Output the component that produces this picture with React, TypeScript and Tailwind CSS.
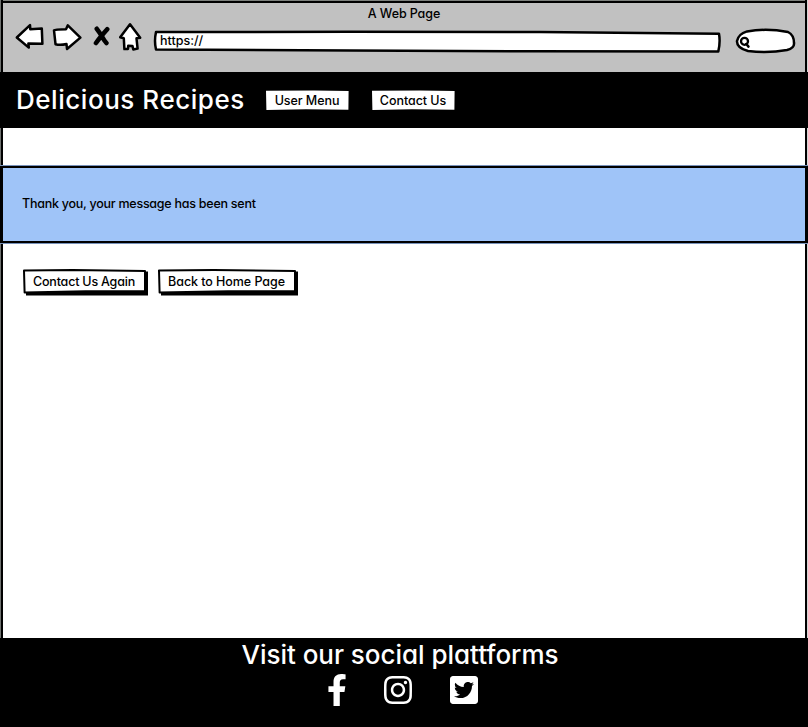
import type { ReactNode } from "react";
import { FaFacebookF, FaInstagram, FaTwitterSquare } from "react-icons/fa";

const stroke = {
  fill: "#fff",
  stroke: "#000",
  strokeWidth: 2.5,
  strokeLinejoin: "round" as const,
  strokeLinecap: "round" as const,
};

function BrowserBar() {
  return (
    <header className="relative h-[72px] shrink-0 border-t border-[#7d817d] bg-[#c1c1c1]">
      <div className="h-[2px] bg-black" />
      <div className="flex h-[21px] items-center justify-center text-[12.5px] tracking-[-0.1px]">
        <h1 className="pt-[2px] font-medium">A Web Page</h1>
      </div>
      <div className="-ml-[3px] flex h-[34px] items-start">
        <svg className="ml-[14px] mt-[-4px] shrink-0" width="30" height="34" viewBox="14 20 30 34" {...stroke}>
          <path d="M16.8 37.5 L30 25.2 L30.3 29.3 L41.8 28.6 L42.4 43.8 L28.4 43.4 L28.8 47.6 Z" />
        </svg>
        <svg className="ml-[7px] mt-[-4px] shrink-0" width="32" height="34" viewBox="51 20 32 34" {...stroke}>
          <path d="M54 30.4 Q55 29.2 66 29.2 L67.8 25.4 L80.4 37.6 L67 49 L66.5 44 Q60 45.6 55.5 44.2 Z" />
        </svg>
        <svg className="ml-[10px] mt-[-4px] shrink-0" width="18" height="34" viewBox="93 20 18 34">
          <path
            d="M96.8 28.8 Q100 33 101.6 35.8 Q104 40.5 106.4 43 M107.2 29.3 Q103.5 33.5 101.6 35.8 Q98.5 39.5 96 43"
            fill="none"
            stroke="#000"
            strokeWidth="4.6"
            strokeLinecap="round"
          />
        </svg>
        <svg className="ml-[6px] mt-[-4px] shrink-0" width="26" height="34" viewBox="117 20 26 34" {...stroke}>
          <path d="M130 24.2 L140.2 37.8 L136.5 38.3 L137.6 48.6 L133.3 49.4 L132.4 45.9 L128.2 45.8 L128 49 L124.4 49.1 L123.8 38.2 L120.2 37.3 Z" />
        </svg>
        <div className="relative ml-[9px] mt-[4px] h-[26px] w-[571px] shrink-0">
          <svg className="absolute inset-0" width="571" height="26" viewBox="152 28 571 26" {...stroke}>
            <path d="M156 32 L350 31.8 L540 32 L719 33.7 Q720.5 42 718.3 51.5 L530 51.3 L350 50.4 L156 49.5 Q154 41 156 32 Z" />
          </svg>
          <span className="relative ml-[8px] block text-[12.5px] font-medium leading-[26px]">https://</span>
        </div>
        <svg className="ml-[11px] mt-[2px] shrink-0" width="64" height="29" viewBox="734 26 64 29" {...stroke}>
          <path d="M747 31.4 Q767 28 788 32 Q794 35 794 43 Q794.6 48 787 50 Q768 53.5 748 51 Q736.6 48 737 41 Q738.4 34 747 31.4 Z" />
          <circle cx="744.5" cy="41.3" r="3.5" strokeWidth="2.3" />
          <path d="M746.3 44 L748.5 46.6" />
        </svg>
      </div>
    </header>
  );
}

function NavLink({ children }: { children: ReactNode }) {
  return (
    <a className="relative flex h-[20px] w-[83px] items-center justify-center text-[12.5px] font-medium">
      <svg className="absolute inset-0" width="83" height="20" viewBox="0 0 83 20" fill="#fff">
        <path d="M0 0.7 L48 0.5 L82.6 1 L82.4 19.7 L40 19.3 L0.4 20 Z" />
      </svg>
      <span className="relative pr-[1px] pt-[2px] tracking-[-0.06px]">{children}</span>
    </a>
  );
}

function SketchButton({ children, wide = false }: { children: ReactNode; wide?: boolean }) {
  const w = wide ? 142 : 127;
  return (
    <button
      className={`relative h-[28px] text-[12.5px] font-medium ${
        wide ? "w-[142px] tracking-[-0.06px]" : "w-[127px] tracking-[-0.2px]"
      }`}
    >
      <svg className="absolute inset-0" width={w} height="28" viewBox={`0 0 ${w} 28`}>
        <path d={`M4 5 L${w - 1} 3.5 L${w - 1} 27.5 L4 27.5 Z`} />
        <path
          d={`M2 2.4 L${w * 0.4} 1.9 L${w - 4} 2.9 L${w - 4} 23.3 L${w * 0.5} 23.3 L2.6 24.5 Z`}
          fill="#fff"
          stroke="#000"
          strokeWidth="2"
          strokeLinejoin="round"
        />
      </svg>
      <span className="relative block pr-[3px] leading-[28px]">{children}</span>
    </button>
  );
}

export default function App() {
  return (
    <div className="flex h-[727px] w-[808px] flex-col overflow-hidden bg-white font-['Inter','Liberation_Sans',sans-serif] text-black [font-feature-settings:'cv11'_1]">
      <div className="flex h-[638px] flex-col border-x border-l-[#6f7270] border-r-[#d5d5d5] bg-black">
        <div className="mr-[2px] ml-[2px] flex h-full flex-col bg-white">
          <BrowserBar />
          <nav className="-mx-[3px] flex h-[56px] shrink-0 items-center bg-black">
            <h2 className="ml-[16px] w-[250px] whitespace-nowrap text-[26px] font-medium leading-[32px] tracking-[0.54px] text-white">
              Delicious Recipes
            </h2>
            <NavLink>User Menu</NavLink>
            <div className="w-[23px]" />
            <NavLink>Contact Us</NavLink>
          </nav>
          <section className="-mx-[3px] mt-[37px] flex h-[79px] shrink-0 items-center border-y border-[#7892ba] bg-black">
            <div className="ml-[1px] flex h-full w-[806px] items-center border-x-2 border-y-2 border-black bg-[#9fc4f8]">
              <p className="ml-[19px] whitespace-nowrap text-[12.5px] font-medium tracking-[-0.25px]">
                Thank you, your message has been sent
              </p>
            </div>
          </section>
          <div className="ml-[19px] mt-[24px] flex gap-[8px]">
            <SketchButton>Contact Us Again</SketchButton>
            <SketchButton wide>Back to Home Page</SketchButton>
          </div>
        </div>
      </div>
      <footer className="flex h-[89px] flex-col items-center bg-black text-white">
        <h2 className="mr-[8px] mt-[1px] whitespace-nowrap text-[26px] font-medium leading-[32px] tracking-[-0.03px]">
          Visit our social plattforms
        </h2>
        <div className="mr-[7px] mt-[3px] flex gap-[34px]">
          <FaFacebookF size={32} />
          <FaInstagram size={32} className="-ml-[5px]" />
          <FaTwitterSquare size={32} />
        </div>
      </footer>
    </div>
  );
}
